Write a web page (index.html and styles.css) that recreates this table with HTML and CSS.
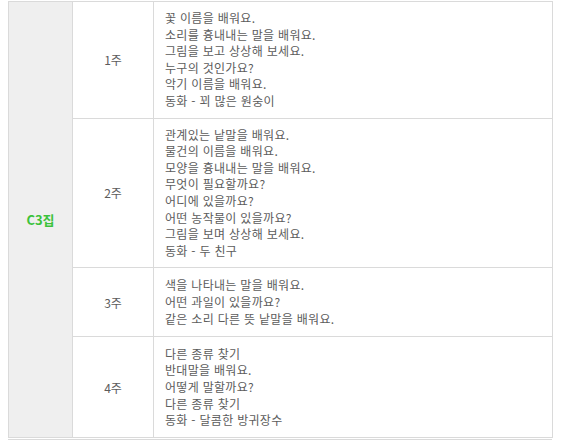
FILE: index.html
```html
<!DOCTYPE html>
<html lang="ko">
<head>
<meta charset="utf-8">
<link rel="stylesheet" href="styles.css">
</head>
<body>
<table class="plan">
  <colgroup>
    <col class="c-book">
    <col class="c-week">
    <col class="c-body">
  </colgroup>
  <tr class="r1">
    <td class="book" rowspan="4">C3집</td>
    <td class="week">1주</td>
    <td class="lessons">꽃 이름을 배워요.<br>소리를 흉내내는 말을 배워요.<br>그림을 보고 상상해 보세요.<br>누구의 것인가요?<br>악기 이름을 배워요.<br>동화 - 꾀 많은 원숭이</td>
  </tr>
  <tr class="r2">
    <td class="week">2주</td>
    <td class="lessons">관계있는 낱말을 배워요.<br>물건의 이름을 배워요.<br>모양을 흉내내는 말을 배워요.<br>무엇이 필요할까요?<br>어디에 있을까요?<br>어떤 농작물이 있을까요?<br>그림을 보며 상상해 보세요.<br>동화 - 두 친구</td>
  </tr>
  <tr class="r3">
    <td class="week">3주</td>
    <td class="lessons">색을 나타내는 말을 배워요.<br>어떤 과일이 있을까요?<br>같은 소리 다른 뜻 낱말을 배워요.</td>
  </tr>
  <tr class="r4">
    <td class="week">4주</td>
    <td class="lessons">다른 종류 찾기<br>반대말을 배워요.<br>어떻게 말할까요?<br>다른 종류 찾기<br>동화 - 달콤한 방귀장수</td>
  </tr>
</table>
<div class="next-edge"></div>
</body>
</html>
```

FILE: styles.css
```css
html, body {
  margin: 0;
  padding: 0;
  background: #ffffff;
}
body {
  padding: 1px 0 0 8px;
  font-family: "Noto Sans CJK KR", "DejaVu Sans", sans-serif;
  font-size: 12px;
  color: #5c5c5c;
}
.plan {
  border-collapse: collapse;
  table-layout: fixed;
  width: 544px;
}
.c-book { width: 64px; }
.c-week { width: 81px; }
.c-body { width: 399px; }
.plan td {
  border: 1px solid #dadada;
  padding: 0;
  vertical-align: middle;
}
.book {
  background: #efefef;
  text-align: center;
  color: #3cc23c;
  font-weight: bold;
  font-size: 13px;
  border-left-color: #e6e6e6;
}
.week {
  text-align: center;
}
.lessons {
  padding: 8px 12px 8px 11px !important;
  line-height: 16.6px;
  letter-spacing: 0.3px;
}
.r1 td { height: 99px; }
.r2 td { height: 132px; }
.r3 td { height: 52px; }
.r4 td { height: 84px; }
.next-edge {
  width: 544px;
  height: 0;
  margin-top: 1px;
  border-top: 1px solid #dadada;
}
```
